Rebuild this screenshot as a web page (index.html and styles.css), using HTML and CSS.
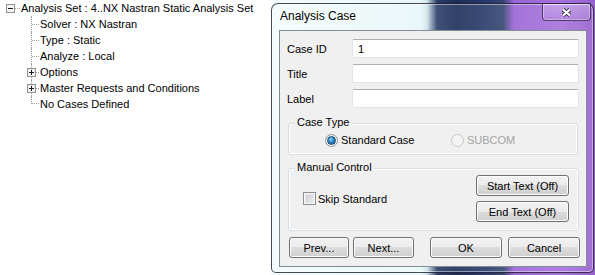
FILE: index.html
```html
<!DOCTYPE html>
<html lang="en">
<head>
    <title>Analysis Case</title>
    <link rel="stylesheet" href="styles.css">
</head>
<body>
  <div class="page">
    <div class="tree_pane">
      <div class="node root">
        <svg class="exp" width="9" height="9" viewBox="0 0 9 9"><rect x="0.5" y="0.5" width="8" height="8" fill="#f3f3f3" stroke="#929292"/><path d="M2 4.5h5" stroke="#1a1a1a"/></svg>
        <span class="dash"></span>
        <span class="txt">Analysis Set : 4..NX Nastran Static Analysis Set</span>
      </div>
      <div class="kids">
        <div class="node"><span class="twig"></span><span class="txt">Solver : NX Nastran</span></div>
        <div class="node"><span class="twig"></span><span class="txt">Type : Static</span></div>
        <div class="node"><span class="twig"></span><span class="txt">Analyze : Local</span></div>
        <div class="node">
          <span class="twig"><svg class="exp" width="9" height="9" viewBox="0 0 9 9"><rect x="0.5" y="0.5" width="8" height="8" fill="#f3f3f3" stroke="#929292"/><path d="M2 4.5h5M4.5 2v5" stroke="#1a1a1a"/></svg></span>
          <span class="txt">Options</span>
        </div>
        <div class="node">
          <span class="twig"><svg class="exp" width="9" height="9" viewBox="0 0 9 9"><rect x="0.5" y="0.5" width="8" height="8" fill="#f3f3f3" stroke="#929292"/><path d="M2 4.5h5M4.5 2v5" stroke="#1a1a1a"/></svg></span>
          <span class="txt">Master Requests and Conditions</span>
        </div>
        <div class="node last"><span class="twig"></span><span class="txt">No Cases Defined</span></div>
      </div>
    </div>

    <div class="desk">
      <div class="win">
        <div class="titlebar">
          <span class="title">Analysis Case</span>
          <button class="close" type="button">
            <svg width="13" height="11" viewBox="0 0 13 11"><path d="M3 2.5l7 6M10 2.5l-7 6" stroke="#3b3646" stroke-width="4.2"/><path d="M3 2.5l7 6M10 2.5l-7 6" stroke="#fff" stroke-width="2.2"/></svg>
          </button>
        </div>
        <div class="client">
          <div class="fields">
            <label for="case_id">Case ID</label>
            <input type="text" id="case_id" value="1">
            <label for="title">Title</label>
            <input type="text" id="title">
            <label for="label">Label</label>
            <input type="text" id="label">
          </div>

          <div class="group case_type">
            <span class="legend">Case Type</span>
            <div class="radios">
              <span class="opt first"><span class="radio on"></span>Standard Case</span>
              <span class="opt off"><span class="radio"></span>SUBCOM</span>
            </div>
          </div>

          <div class="group manual">
            <span class="legend">Manual Control</span>
            <div class="manual_body">
              <span class="check"><span class="checkbox"></span>Skip Standard</span>
              <div class="side_btns">
                <button class="btn wide" type="button">Start Text (Off)</button>
                <button class="btn wide" type="button">End Text (Off)</button>
              </div>
            </div>
          </div>

          <div class="actions">
            <button class="btn" id="prev" type="button">Prev...</button>
            <button class="btn" id="next" type="button">Next...</button>
            <button class="btn" id="ok" type="button">OK</button>
            <button class="btn" id="cancel" type="button">Cancel</button>
          </div>
        </div>
      </div>
    </div>
  </div>
</body>
</html>
```

FILE: styles.css
```css
*{
    margin: 0;
    box-sizing: border-box;
}
body{
    background-color: #fff;
    font-family: "Liberation Sans", Arial, sans-serif;
    font-size: 11px;
    color: #000;
}
.page{
    display: flex;
    width: 595px;
    height: 275px;
    overflow: hidden;
}

/* tree on the left */
.tree_pane{
    width: 271px;
    padding-left: 6px;
    background-color: #fff;
}
.node{
    display: flex;
    align-items: center;
    height: 16px;
    white-space: nowrap;
}
.exp{
    display: block;
    flex: none;
}
.dash{
    width: 5px;
    border-top: 1px dotted #a0a0a0;
}
.root .txt{
    margin-left: 1px;
}
.kids{
    margin-left: 25px;
}
.twig{
    display: flex;
    align-items: center;
    width: 8px;
    height: 16px;
    border-left: 1px dotted #a0a0a0;
}
.twig::after{
    content: "";
    flex: 1;
    border-top: 1px dotted #a0a0a0;
}
.twig .exp{
    margin-left: -5px;
}
.node.last .twig{
    align-self: flex-start;
    align-items: flex-end;
    height: 8px;
}
.kids .txt{
    margin-left: 1px;
}

/* desktop + glass window */
.desk{
    flex: 1;
    padding-top: 3px;
    background: linear-gradient(90deg, #f4fcfd 0px, #e8f7f9 150px, #cfe4ea 156px, #2b3d69 166px, #1b2c57 185px, #27396a 215px, #33446f 232px, #9a64d6 243px, #a672dc 290px, #9560cc 324px);
}
.win{
    display: flex;
    flex-direction: column;
    width: 323px;
    height: 270px;
    padding: 0 6px 5px 7px;
    border: 1px solid rgba(28, 26, 44, 0.8);
    border-radius: 7px 7px 5px 5px;
    background-color: rgba(255, 255, 255, 0.1);
    box-shadow: inset 0 0 0 1px rgba(255, 255, 255, 0.45);
}
.titlebar{
    display: flex;
    justify-content: space-between;
    align-items: flex-start;
    height: 26px;
}
.title{
    padding: 5px 0 0 1px;
    font-size: 12px;
    line-height: 14px;
    text-shadow: 0 0 4px #fff, 0 0 2px #fff;
}
.close{
    display: flex;
    align-items: center;
    justify-content: center;
    width: 49px;
    height: 18px;
    margin: -1px -4px 0 0;
    padding: 0;
    border: 1px solid rgba(45, 25, 70, 0.75);
    border-radius: 0 0 4px 4px;
    background: linear-gradient(rgba(255, 255, 255, 0.28), rgba(255, 255, 255, 0.08));
    box-shadow: inset 0 0 0 1px rgba(255, 255, 255, 0.35);
}
.client{
    display: flex;
    flex-direction: column;
    height: 237px;
    border: 1px solid #838b95;
    background-color: #f0f0f0;
}

/* text fields */
.fields{
    display: grid;
    grid-template-columns: 65px 1fr;
    align-items: center;
    row-gap: 6px;
    margin: 8px 7px 0 7px;
}
.fields input{
    height: 19px;
    padding: 0 5px;
    border: 1px solid #e2e3ea;
    border-top-color: #abadb3;
    border-radius: 2px;
    background-color: #fff;
    font: inherit;
    color: #000;
    outline: none;
}

/* group boxes */
.group{
    display: flex;
    flex-direction: column;
    margin: 15px 8px 0 8px;
    border: 1px solid #d5dfe5;
    border-radius: 3px;
    box-shadow: inset 0 0 0 1px #fff;
}
.case_type{
    height: 32px;
}
.manual{
    height: 63px;
    margin-top: 13px;
    margin-right: 7px;
}
.legend{
    align-self: flex-start;
    margin: -9px 0 0 6px;
    padding: 0 2px;
    background-color: #f0f0f0;
    line-height: 14px;
}
.radios{
    display: flex;
    margin: 5px 0 0 36px;
}
.opt{
    display: flex;
    align-items: center;
    gap: 3px;
    line-height: 13px;
}
.opt.first{
    width: 126px;
}
.opt.off{
    color: #a3a3a3;
}
.radio{
    display: flex;
    align-items: center;
    justify-content: center;
    width: 13px;
    height: 13px;
    border: 1px solid #8f9297;
    border-radius: 50%;
    background: linear-gradient(135deg, #d6d8dc, #fcfcfc);
    box-shadow: inset 0 0 0 1px #f6f6f6;
}
.radio.on::after{
    content: "";
    width: 7px;
    height: 7px;
    border-radius: 50%;
    border: 1px solid #1f4a72;
    background: radial-gradient(circle at 40% 35%, #8fd3fb 0, #2e86c8 45%, #0c467a 100%);
}
.opt.off .radio{
    border-color: #c7c9cc;
    background: #f4f4f4;
    box-shadow: none;
}
.manual_body{
    display: flex;
    justify-content: space-between;
    align-items: center;
    margin: 1px 9px 0 14px;
}
.check{
    display: flex;
    align-items: center;
    gap: 2px;
}
.checkbox{
    width: 13px;
    height: 13px;
    border: 1px solid #8e8f8f;
    background: linear-gradient(135deg, #c3c7cd, #f4f4f5);
    box-shadow: inset 0 0 0 1px #f7f7f7, inset 0 0 0 2px #e4e6e9;
}
.side_btns{
    display: flex;
    flex-direction: column;
    gap: 5px;
}

/* buttons */
.btn{
    height: 21px;
    padding: 0;
    border: 1px solid #707070;
    border-radius: 3px;
    background: linear-gradient(#f2f2f2 0%, #ebebeb 50%, #dddddd 50%, #cfcfcf 100%);
    box-shadow: inset 0 0 0 1px #fcfcfc;
    font: inherit;
    color: #000;
}
.btn.wide{
    width: 93px;
}
.actions{
    display: flex;
    margin: 6px 0 0 9px;
}
#prev{
    width: 60px;
}
#next{
    width: 61px;
    margin-left: 4px;
}
#ok{
    width: 72px;
    margin-left: 16px;
}
#cancel{
    width: 72px;
    margin-left: 6px;
}
```
